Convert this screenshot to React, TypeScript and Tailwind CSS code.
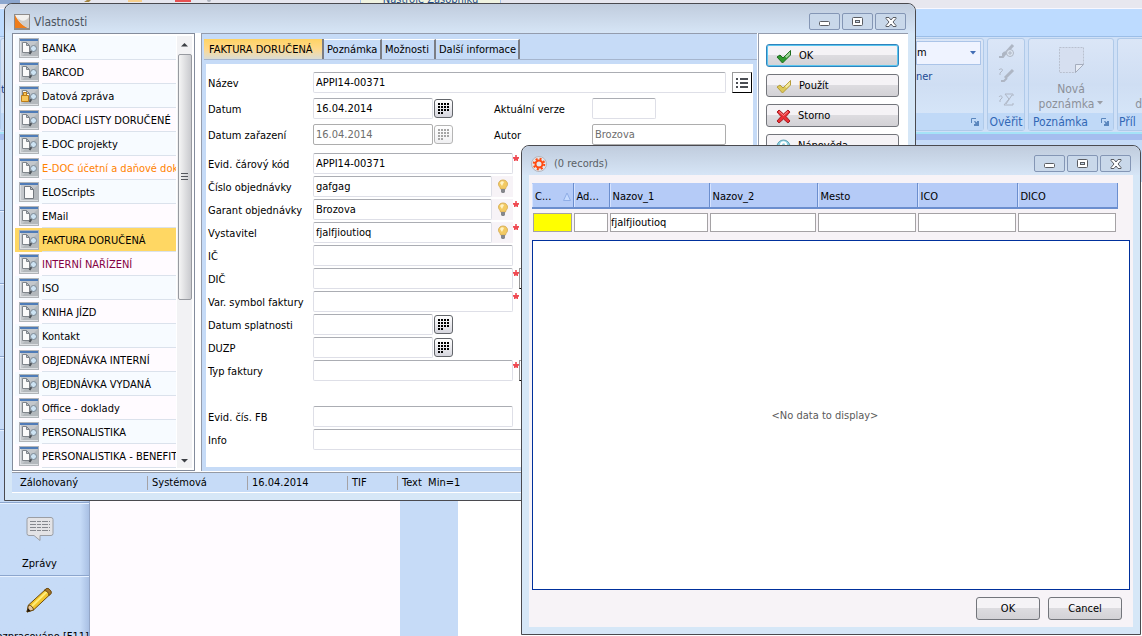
import React from 'react';

type DocType = { name: string; icon?: 'search' | 'lock' | 'page'; color?: string; selected?: boolean };

const docTypes: DocType[] = [
  { name: 'BANKA' },
  { name: 'BARCOD' },
  { name: 'Datová zpráva', icon: 'lock' },
  { name: 'DODACÍ LISTY DORUČENÉ' },
  { name: 'E-DOC projekty' },
  { name: 'E-DOC účetní a daňové dok', color: 'text-[#ff8200]' },
  { name: 'ELOScripts', icon: 'page' },
  { name: 'EMail' },
  { name: 'FAKTURA DORUČENÁ', selected: true },
  { name: 'INTERNÍ NAŘÍZENÍ', color: 'text-[#840042]' },
  { name: 'ISO' },
  { name: 'KNIHA JÍZD' },
  { name: 'Kontakt' },
  { name: 'OBJEDNÁVKA INTERNÍ' },
  { name: 'OBJEDNÁVKA VYDANÁ' },
  { name: 'Office - doklady' },
  { name: 'PERSONALISTIKA' },
  { name: 'PERSONALISTIKA - BENEFIT' },
];

const columns = [
  { id: 'c', label: 'C...', width: 'w-[41px]', fill: 'bg-[#ffff00]', value: '' },
  { id: 'ad', label: 'Ad...', width: 'w-[36px]', fill: 'bg-white', value: '' },
  { id: 'nazov1', label: 'Nazov_1', width: 'w-[100px]', fill: 'bg-white', value: 'fjalfjioutioq' },
  { id: 'nazov2', label: 'Nazov_2', width: 'w-[108px]', fill: 'bg-white', value: '' },
  { id: 'mesto', label: 'Mesto', width: 'w-[100px]', fill: 'bg-white', value: '' },
  { id: 'ico', label: 'ICO', width: 'w-[100px]', fill: 'bg-white', value: '' },
  { id: 'dico', label: 'DICO', width: 'w-[100px]', fill: 'bg-white', value: '' },
];

function DocIcon({ kind = 'search' }: { kind?: DocType['icon'] }) {
  return (
    <svg width="20" height="20" viewBox="0 0 20 20" className="shrink-0">
      <rect x="0.5" y="0.5" width="19" height="19" fill="#c3c7cb" stroke="#b0b4b8" />
      <path d="M19 3v16H2z" fill="#b3b8bc" />
      <rect x="1" y="1" width="18" height="2" fill="#4f7cb8" />
      <path d="M1 19V3h1v15h17v1z" fill="#dcdfe2" />
      {kind === 'page' ? (
        <path d="M5.500 4.500h6l3 3v9h-9zM11.500 4.500v3h3" fill="#fafafa" stroke="#73797f" />
      ) : (
        <>
          <path d="M3.500 4.500h4l3 3v7h-7zM7.500 4.500v3h3" fill="#fafafa" stroke="#7f858b" />
          {kind === 'lock' && (
            <path d="M2.500 9.500h7v6h-7zM4.500 9.500v-3h3v3" fill="#f7c65a" stroke="#bd7d18" />
          )}
          <path d="M12.500 13l-2 3" stroke="#4d5359" strokeWidth="2" />
          <circle cx="14.500" cy="10.500" r="3" fill="#cde3f3" stroke="#7b8894" />
        </>
      )}
    </svg>
  );
}

function BulbIcon() {
  return (
    <svg width="12" height="15" viewBox="0 0 12 15">
      <path d="M6 1c3 0 4.500 2 4.500 4.200C10.500 7.500 8.500 8 8.500 10h-5c0-2-2-2.500-2-4.800C1.500 3 3 1 6 1z" fill="#f3ca62" stroke="#d9b15c" />
      <path d="M3 4c1-2 3-2 4-1L5 7z" fill="#fff3c4" />
      <path d="M4 10h4v3l-1 1H5l-1-1z" fill="#85878c" />
    </svg>
  );
}

function CheckIcon({ dark, mid, light }: { dark: string; mid: string; light: string }) {
  return (
    <svg width="16" height="15" viewBox="0 0 16 15">
      <path d="M1 8l3-2 3 3 7.500-7.500V6l-8 8z" fill={mid} stroke={dark} />
      <path d="M9 7.500L14 2.500v3.300L10.500 9z" fill={light} />
    </svg>
  );
}

function CrossIcon() {
  return (
    <svg width="15" height="15" viewBox="0 0 15 15">
      <path d="M1 3l2-2 4.500 4L12 1l2 2-4 4.500L14 12l-2 2-4.500-4L3 14l-2-2 4-4.500z" fill="#ea2f35" stroke="#a51c20" />
      <path d="M3 2.500l4.500 4L12 2.500" fill="none" stroke="#ff8f8f" />
    </svg>
  );
}

function HelpIcon() {
  return (
    <svg width="15" height="15" viewBox="0 0 15 15">
      <circle cx="7.500" cy="7.500" r="6.500" fill="#8fd0e0" stroke="#5fa5b8" />
      <path d="M5 6c0-3.500 5-3.500 5-.5 0 2-2.500 2-2.500 4M7.500 11v1.500" fill="none" stroke="#fff" strokeWidth="2" />
    </svg>
  );
}

function ListButton() {
  return (
    <button type="button" aria-label="Seznam" className="flex h-[21px] w-5 shrink-0 items-center justify-center border border-black border-t-[#9a9a9a] border-l-[#9a9a9a] bg-white">
      <svg width="13" height="12" viewBox="0 0 13 12">
        <path d="M0 2h2M0 6h2M0 10h2M4 2h8M4 6h8M4 10h8" stroke="#4a4d52" strokeWidth="2" />
      </svg>
    </button>
  );
}

function CaptionButtons() {
  const cls = 'flex h-[17px] w-[31px] items-center justify-center rounded-[2px] border border-[#8496b5] bg-[#c9d8ea]';
  return (
    <div className="flex gap-[2px]">
      <button aria-label="Minimize" className={cls}>
        <svg width="13" height="9" viewBox="0 0 13 9">
          <rect x="1.500" y="4.500" width="10" height="4" rx="1" fill="#fff" stroke="#5a5d63" />
        </svg>
      </button>
      <button aria-label="Maximize" className={cls}>
        <svg width="11" height="9" viewBox="0 0 11 9">
          <rect x="0.500" y="0.500" width="10" height="8" rx="1" fill="#fff" stroke="#5a5d63" />
          <rect x="3.500" y="3.500" width="4" height="2" fill="#c6d6e7" stroke="#5a5d63" />
        </svg>
      </button>
      <button aria-label="Close" className={cls}>
        <svg width="12" height="10" viewBox="0 0 12 10">
          <path d="M1 .5h3l2 2.500L8 .5h3v1L8 5l3 3.500v1H8L6 7 4 9.500H1v-1L4 5 1 1.500z" fill="#fff" stroke="#5a5d63" />
        </svg>
      </button>
    </div>
  );
}

function CalendarButton({ disabled = false }: { disabled?: boolean }) {
  return (
    <button
      type="button"
      aria-label="Kalendář"
      disabled={disabled}
      className="ml-px flex h-[19px] w-[19px] shrink-0 items-center justify-center rounded-[3px] border border-[#63666b] bg-linear-to-b from-white to-[#d6d6de] disabled:border-[#b5b5b5] disabled:to-[#f0f0f2]"
    >
      <svg width="11" height="11" viewBox="0 0 11 11">
        <path d="M0 1h11M0 4h11M0 7h11M0 10h5" stroke={disabled ? '#a5a5a5' : '#000'} strokeWidth="2" strokeDasharray="2 1" />
      </svg>
    </button>
  );
}

type FieldProps = {
  id: string;
  label: string;
  value?: string;
  width?: string;
  gap?: string;
  disabled?: boolean;
  bulb?: boolean;
  required?: boolean;
  calendar?: boolean;
  children?: React.ReactNode;
};

const inputCls =
  'h-[21px] rounded-[2px] border border-[#dedfe7] border-t-[#abadb3] bg-white px-[2px] pb-px text-black outline-none disabled:border-[#adadad] disabled:text-[#6d6d6d]';

function Field({ id, label, value = '', width = 'w-[200px]', gap = 'mb-[2px]', disabled, bulb, required, calendar, children }: FieldProps) {
  return (
    <div className={`flex h-[21px] items-center ${gap}`}>
      <label htmlFor={id} className="w-[105px] shrink-0 pt-[2px] whitespace-nowrap">{label}</label>
      <input id={id} defaultValue={value} disabled={disabled} className={`${inputCls} ${width}`} />
      {bulb && (
        <button type="button" aria-label="Nápověda k poli" className="flex h-[21px] w-[21px] items-center justify-center bg-[#f7f3f7]">
          <BulbIcon />
        </button>
      )}
      {calendar && <CalendarButton disabled={disabled} />}
      {required && (
        <svg width="6" height="8" viewBox="0 0 6 8" className="shrink-0 self-start">
          <path d="M2.200 2h1.600v2H6v1.400L5 6v2H3.800L3 7l-.8 1H1V6L0 5.400V4h2.200z" fill="#ef4a52" />
        </svg>
      )}
      {children}
    </div>
  );
}

const sideButton =
  'flex h-[23px] w-[133px] items-center gap-[7px] rounded-[3px] border bg-linear-to-b from-[#f5f3f6] from-50% via-[#dddce0] via-50% to-[#d3d2d6] pt-px pl-[9px]';

function PropertiesWindow() {
  return (
    <section className="absolute top-[3px] right-[226px] left-1 rounded-t-lg border border-[#4a4a4f] bg-[#d6e7f7] px-[7px] pb-[7px]">
      <header className="-mx-[7px] flex h-[29px] items-center rounded-t-lg bg-linear-to-b from-[#c0ccdd] to-[#d6e5f6] pt-[6px] pr-[9px] pl-[9px]">
        <svg width="16" height="16" viewBox="0 0 16 16">
          <rect width="16" height="16" fill="#8f8c8a" />
          <rect x="1" y="1" width="14" height="13" fill="#f3f1ee" />
          <path d="M1 1c3 6 7 10 13 13H1z" fill="#ef7d1a" />
          <path d="M15 3v11h-1C9 12 5 8 3 3c4 5 8 5 12 0z" fill="#cfcdcb" />
        </svg>
        <h1 className="ml-1 flex-1 text-[12px] text-[#4c5560]">Vlastnosti</h1>
        <CaptionButtons />
      </header>

      <div className="bg-white">
        <div className="flex">
          {/* Document types */}
          <nav className="flex w-[183px] shrink-0 border border-[#848c9c] bg-white p-[2px]">
            <ul className="w-[161px]">
              {docTypes.map((d, i) => (
                <li key={d.name} className={d.selected ? 'bg-[#ffd763]' : i % 2 ? 'bg-[#fffbff]' : 'bg-[#f7fbff]'}>
                  <button className="flex h-6 w-full items-center pl-1 text-left">
                    <DocIcon kind={d.icon} />
                    <span className={`ml-[3px] flex h-6 flex-1 items-center overflow-hidden border-b border-[#dbe2ec] pt-[2px] whitespace-nowrap ${d.color ?? 'text-black'}`}>
                      {d.name}
                    </span>
                  </button>
                </li>
              ))}
            </ul>
            <div className="ml-px flex flex-1 flex-col items-center bg-[#f2f2f4]">
              <svg width="15" height="18" viewBox="0 0 15 18">
                <path d="M4 10.500h7L7.500 7z" fill="#3c3f44" />
              </svg>
              <div className="flex h-[246px] w-[14px] items-center justify-center rounded-[2px] border border-[#979aa0] bg-linear-to-r from-[#f5f5f5] to-[#c9cace]">
                <svg width="8" height="8" viewBox="0 0 8 8">
                  <path d="M0 .5h7M0 3.500h7M0 6.500h7" stroke="#54575d" />
                </svg>
              </div>
              <svg width="15" height="15" viewBox="0 0 15 15" className="mt-auto">
                <path d="M4 6h7l-3.500 3.500z" fill="#3c3f44" />
              </svg>
            </div>
          </nav>

          {/* Form with tabs */}
          <div className="mr-px ml-[6px] flex min-w-0 flex-1 flex-col border-t border-l border-[#949cad] bg-[#c6dbf7] pt-[5px] pr-1 pb-1 pl-1">
            <div role="tablist" className="-mr-1 -ml-[2px] flex h-[21px] border-b border-[#a5b5ce] text-left whitespace-nowrap">
              <button role="tab" aria-selected="true" className="w-[120px] border-r-2 border-[#7b7d84] bg-linear-to-b from-[#ffd363] via-[#ffd98a] to-[#d9dcd5] pt-[2px] pl-[5px] text-left">
                FAKTURA DORUČENÁ
              </button>
              <button role="tab" className="w-[58px] border-t border-r-2 border-t-white border-r-[#7b7d84] pt-px pl-[3px] text-left">Poznámka</button>
              <button role="tab" className="w-[54px] border-t border-r-2 border-t-white border-r-[#7b7d84] pt-px pl-[3px] text-left">Možnosti</button>
              <button role="tab" className="w-[84px] border-t border-r-2 border-t-white border-r-[#7b7d84] pt-px pl-[3px] text-left">Další informace</button>
            </div>
            <form className="mt-1 flex-1 bg-white pt-2 pb-4 pl-[2px]">
              <Field id="nazev" label="Název" value="APPI14-00371" width="mr-[6px] min-w-0 flex-1" gap="mr-px mb-[5px]">
                <ListButton />
              </Field>
              <Field id="datum" label="Datum" value="16.04.2014" width="w-[120px]" gap="mb-[5px]" calendar>
                <label htmlFor="verze" className="ml-[41px] w-[98px] shrink-0 pt-[3px]">Aktuální verze</label>
                <input id="verze" className={`${inputCls} w-16`} />
              </Field>
              <Field id="zarazeni" label="Datum zařazení" value="16.04.2014" width="w-[120px]" gap="mb-2" disabled calendar>
                <label htmlFor="autor" className="ml-[41px] w-[98px] shrink-0 pt-[3px]">Autor</label>
                <input id="autor" defaultValue="Brozova" disabled className={`${inputCls} w-[134px]`} />
              </Field>
              <Field id="kod" label="Evid. čárový kód" value="APPI14-00371" required />
              <Field id="cislo" label="Číslo objednávky" value="gafgag" width="w-[179px]" bulb />
              <Field id="garant" label="Garant objednávky" value="Brozova" width="w-[179px]" bulb required />
              <Field id="vystavitel" label="Vystavitel" value="fjalfjioutioq" width="w-[179px]" bulb required />
              <Field id="ic" label="IČ" />
              <Field id="dic" label="DIČ" required>
                <ListButton />
              </Field>
              <Field id="symbol" label="Var. symbol faktury" required />
              <Field id="splatnost" label="Datum splatnosti" width="w-[120px]" calendar />
              <Field id="duzp" label="DUZP" width="w-[120px]" calendar />
              <Field id="typ" label="Typ faktury" required gap="mb-[25px]">
                <ListButton />
              </Field>
              <Field id="fb" label="Evid. čís. FB" />
              <Field id="info" label="Info" width="w-[413px]" gap="mb-0" />
            </form>
          </div>

          <aside className="flex w-[150px] shrink-0 flex-col gap-[7px] border-t border-l border-[#949cad] pt-[10px] pl-[7px]">
            <button className={`${sideButton} border-[#2f83bd] ring-1 ring-[#5ac6ef] ring-inset`}>
              <CheckIcon dark="#1c6b1c" mid="#2f9a2f" light="#9fd49a" /> OK
            </button>
            <button className={`${sideButton} border-[#73757b]`}>
              <CheckIcon dark="#b59c3a" mid="#dcc85a" light="#f3e9a0" /> Použít
            </button>
            <button className={`${sideButton} border-[#73757b]`}>
              <CrossIcon /> Storno
            </button>
            <button className={`${sideButton} border-[#73757b]`}>
              <HelpIcon /> Nápověda
            </button>
          </aside>
        </div>

        <footer className="mt-px flex h-[21px] items-center border-t border-b border-t-[#949aa5] border-b-white bg-[#c6dbf7] pl-2">
          <span className="w-[128px] border-r border-[#a5a2a5]">Zálohovaný</span>
          <span className="w-[100px] border-r border-[#a5a2a5] pl-1">Systémová</span>
          <span className="w-[100px] border-r border-[#a5a2a5] pl-1">16.04.2014</span>
          <span className="w-[50px] border-r border-[#a5a2a5] pl-1">TIF</span>
          <span className="pl-1 whitespace-pre">Text  Min=1</span>
        </footer>
      </div>
    </section>
  );
}

const dialogButton =
  'h-[23px] rounded-[3px] border border-[#73757b] bg-linear-to-b from-[#f5f3f6] from-50% via-[#dddce0] via-50% to-[#d3d2d6]';

function RecordsDialog() {
  return (
    <section role="dialog" aria-label="(0 records)" className="absolute top-[145px] right-px left-[521px] rounded-t-lg border border-[#4a4a4f] bg-[#d6e7f7] px-[7px] pb-[7px]">
      <header className="-mx-[7px] flex h-[29px] items-center rounded-t-lg bg-linear-to-b from-[#c0ccdd] to-[#d6e5f6] pt-[6px] pr-[9px] pl-[9px]">
        <svg width="16" height="16" viewBox="0 0 16 16">
          <circle cx="8" cy="8" r="7.500" fill="#e6e6e9" stroke="#b5b5bd" />
          <circle cx="8" cy="8" r="3.500" fill="none" stroke="#ff4a10" strokeWidth="2" />
          <circle cx="8" cy="8" r="5.200" fill="none" stroke="#ff4a10" strokeWidth="2" strokeDasharray="2 2.080" />
        </svg>
        <h2 className="ml-[7px] flex-1 pt-px text-[#5a5f66]">(0 records)</h2>
        <CaptionButtons />
      </header>
      <div className="bg-[#f7f3f7] px-[3px] pt-2 pb-[7px]">
        <table className="w-[585px] table-fixed border-collapse">
          <thead>
            <tr className="h-[25px] border-b-2 border-[#6b8ece] bg-[#b5cbf7]">
              {columns.map((c) => (
                <th key={c.id} scope="col" className={`${c.width} border-r border-[#6b8ece] p-0 text-left font-normal`}>
                  <div className="flex h-[23px] items-center justify-between border-l border-[#d6e3ff] pt-[3px] pr-[2px] pl-[2px]">
                    {c.label}
                    {c.id === 'c' && (
                      <svg width="8" height="9" viewBox="0 0 8 9">
                        <path d="M4 1L.5 8.500h7z" fill="#c6dbff" stroke="#8fadE6" />
                      </svg>
                    )}
                  </div>
                </th>
              ))}
            </tr>
          </thead>
          <tbody>
            <tr>
              {columns.map((c) => (
                <td key={c.id} className="pt-1 pr-px pl-px">
                  <input aria-label={c.label} defaultValue={c.value} className={`block h-[19px] w-full border border-[#a5a2a5] px-0 outline-none ${c.fill}`} />
                </td>
              ))}
            </tr>
          </tbody>
        </table>
        <div className="mt-2 flex h-[350px] items-center justify-center border border-[#00309c] bg-white pt-px pr-3 text-[#5a5a5a]">
          &lt;No data to display&gt;
        </div>
        <div className="mt-[7px] mr-2 flex justify-end gap-2">
          <button className={`${dialogButton} w-16`}>OK</button>
          <button className={`${dialogButton} w-[74px]`}>Cancel</button>
        </div>
      </div>
    </section>
  );
}

const group = 'flex h-[93px] shrink-0 flex-col rounded-[3px] border border-[#b0cae9] bg-linear-to-b from-[#dbe6f7] via-[#cfdef3] to-[#d9e9fb]';
const groupLabel = 'mt-auto flex h-[17px] items-center bg-[#c0d9f7] text-[12px] whitespace-nowrap text-[#3167b5]';

function Launcher() {
  return (
    <svg width="8" height="8" viewBox="0 0 8 8">
      <path d="M.5 5V.5H5" fill="none" stroke="#5a86bd" />
      <path d="M3 3h1l2 1.500V3h2v5H3V6h1.500z" fill="#5a86bd" />
    </svg>
  );
}

function Ribbon() {
  return (
    <>
      {/* Quick access strip */}
      <div className="flex h-[9px] shrink-0 overflow-hidden border-b border-[#f7f7ff] bg-[#e7e7ef]">
        <svg width="360" height="4" viewBox="0 0 360 4" className="shrink-0">
          <rect width="20" height="4" fill="#8ca6ce" />
          <path d="M84 2h5l2-2h-4z" fill="#a58642" />
          <rect x="128" width="14" height="2" fill="#f7cf8c" />
          <rect x="175" width="16" height="2" fill="#e75152" />
          <circle cx="209" cy="0" r="2" fill="#adb2bd" />
        </svg>
        <div className="flex w-[141px] items-end justify-center border-x border-[#a5c3e7] bg-[#f0f3e0] pb-[3px] text-[11px] leading-[11px] whitespace-nowrap text-[#21498c]">
          Nástroje Zásobníku
        </div>
      </div>
      <div className="h-[27px] shrink-0 bg-[#bddbff]" />
      <div className="flex h-[98px] shrink-0 gap-[3px] overflow-hidden border-t border-b-2 border-t-[#9cbee7] border-b-[#a5e3f7] bg-[#cfe0f7] pt-px">
        <div className={`${group} w-[984px]`}>
          <div className="flex items-start justify-between">
            <span className="pt-11 text-[#1c4a94]">t</span>
            <div className="w-[67px]">
              <div className="mt-[2px] flex h-6 w-[65px] items-center justify-between border border-[#abc4e8] bg-[#eff3ff] pr-1">
                <span>m</span>
                <svg width="6" height="4" viewBox="0 0 6 4">
                  <path d="M0 0h6L3 3.500z" fill="#426db5" />
                </svg>
              </div>
              <p className="mt-[5px] text-[#1c4a94]">ner</p>
            </div>
          </div>
          <div className={`${groupLabel} justify-end pr-1`}>
            <Launcher />
          </div>
        </div>
        <div className={`${group} w-[38px]`}>
          <svg width="35" height="72" viewBox="0 0 35 72" fill="none" stroke="#aeb6c4">
            <path d="M11 18h4l3-4M15 18v-3l2-2" strokeWidth="2" />
            <path d="M17 15l8-9" strokeWidth="3" />
            <circle cx="22" cy="14" r="3.500" fill="#dde6f2" />
            <path d="M20 14h4M22 12v4" />
            <path d="M11 31c1-2 5-1 3 1l-2 2v2" />
            <path d="M13 42h3l3-3" strokeWidth="2" />
            <path d="M17 39l8-8" strokeWidth="3" />
            <path d="M11 58c1-2 4-1 3 1l-2 2v2M25 57v-2h-8l4 5-5 6h9v-2M24 56l-6 9" />
          </svg>
          <div className={`${groupLabel} justify-center`}>Ověřit</div>
        </div>
        <div className={`${group} w-[86px]`}>
          <div className="flex flex-col items-center pt-2 text-center text-[12px] leading-[15px] text-[#8c9099]">
            <svg width="27" height="27" viewBox="0 0 27 27">
              <path d="M1.500.5h24v17l-8 8h-16z" fill="#d6dff0" stroke="#b9c0cf" strokeDasharray="2 1" />
              <path d="M25.500 17.500h-8v8z" fill="#e6ebf5" stroke="#a5adbd" />
            </svg>
            <p className="mt-2 whitespace-nowrap">
              Nová
              <br />
              poznámka
              <svg width="6" height="4" viewBox="0 0 6 4" className="mb-1 ml-[3px] inline">
                <path d="M0 0h6L3 3.500z" fill="#9a9ea6" />
              </svg>
            </p>
          </div>
          <div className={`${groupLabel} justify-between px-1`}>
            Poznámka <Launcher />
          </div>
        </div>
        <div className={`${group} min-w-0 flex-1 rounded-r-none border-r-0`}>
          <p className="pt-[58px] text-right text-[12px] leading-[15px] text-[#8c9099]">d</p>
          <div className={`${groupLabel} pl-px`}>Příl</div>
        </div>
      </div>
    </>
  );
}

const sideItem = 'flex h-[73px] shrink-0 flex-col items-center border-t border-[#8ca6ce] pr-[10px] whitespace-nowrap shadow-[inset_0_1px_0_#e7f1ff]';

export default function App() {
  return (
    <div className="relative flex h-screen flex-col overflow-hidden bg-white font-['DejaVu_Sans_Condensed','DejaVu_Sans',sans-serif] text-[11px] leading-[14px] text-black">
      <Ribbon />
      <div className="flex min-h-0 flex-1 border-t-[6px] border-[#a5beef]">
        <div className="flex w-[90px] shrink-0 flex-col overflow-hidden border-r border-[#94a6c6] bg-linear-to-r from-[#c6dbf7] from-90% to-[#a9c0e4] pt-[70px]">
          <div className={sideItem} />
          <div className={sideItem} />
          <div className={sideItem} />
          <div className={sideItem} />
          <button className={sideItem}>
            <svg width="30" height="26" viewBox="0 0 30 26" className="mt-[13px]">
              <path d="M4 1.500h22a2 2 0 012 2v14a2 2 0 01-2 2H15v5l-6-5H4a2 2 0 01-2-2v-14a2 2 0 012-2z" fill="#e3e3e6" stroke="#9b9ea4" />
              <path d="M5 5.500h20M5 8.500h20M5 11.500h20M5 14.500h20" stroke="#85888e" strokeDasharray="6 1 4 1" />
            </svg>
            <span className="mt-[15px]">Zprávy</span>
          </button>
          <button className={sideItem}>
            <svg width="28" height="28" viewBox="0 0 28 28" className="mt-[11px]">
              <path d="M1 25l1.500-7L20 2c2-2 6 2 5 4.500L7.500 23z" fill="#f2c52d" stroke="#6b4a10" />
              <path d="M5 20L21 4.500" stroke="#ffec7a" strokeWidth="2" />
              <path d="M1 25l1.500-7c2.500 0 5 2.500 5 5z" fill="#e7c69c" stroke="#6b4a10" />
              <path d="M1 25l1-4 2.500 3z" fill="#18100a" />
              <path d="M20 2c2-2 6 2 5 4.500l-2 2c0-3-2.500-5-5-5z" fill="#a8762b" stroke="#6b4a10" />
            </svg>
            <span className="mt-[15px]">Rozpracováno [F11]</span>
          </button>
        </div>
        <div className="w-[310px] shrink-0 bg-[#fffbff]" />
        <div className="w-[58px] shrink-0 bg-[#c6dbf7]" />
        <div className="flex-1 bg-white">
          <div className="h-[42px] bg-[#c6dbf7]" />
        </div>
      </div>
      <PropertiesWindow />
      <RecordsDialog />
    </div>
  );
}
